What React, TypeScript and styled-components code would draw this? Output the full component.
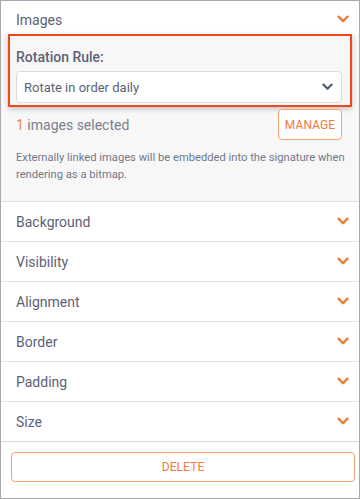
import React from 'react'
import styled, { createGlobalStyle } from 'styled-components'

const GlobalStyle = createGlobalStyle`
  html, body {
    margin: 0;
    padding: 0;
    background: #ffffff;
  }
  body {
    font-family: Roboto, 'Noto Sans', Arial, sans-serif;
    -webkit-font-smoothing: antialiased;
  }
`

const Panel = styled.div`
  box-sizing: border-box;
  width: 360px;
  height: 499px;
  border: 1px solid #a9a9a9;
  background: #ffffff;
  display: flex;
  flex-direction: column;
  overflow: hidden;
`

const SectionHeader = styled.div<{ $open?: boolean }>`
  box-sizing: border-box;
  flex-shrink: 0;
  height: ${({ $open }) => ($open ? '33px' : '40px')};
  padding: ${({ $open }) => ($open ? '4px 10px 0 15px' : '0 10px 0 15px')};
  display: flex;
  align-items: center;
  justify-content: space-between;
  border-bottom: ${({ $open }) => ($open ? 'none' : '1px solid #e4e4e4')};
  font-size: 14px;
  color: #5c6275;
  background: #ffffff;
`

const Expanded = styled.div`
  flex-shrink: 0;
  background: #f7f7f7;
  border-bottom: 1px solid #e4e4e4;
  padding: 0 0 18px;
`

const Highlight = styled.div`
  box-sizing: border-box;
  margin: 0 7px;
  border: 2px solid #ec4a1c;
  padding: 13px 8px 2px 6px;
  box-shadow: 0 2px 5px rgba(0, 0, 0, 0.22);
`

const FieldLabel = styled.div`
  font-size: 14px;
  font-weight: 500;
  line-height: 16px;
  color: #5c6275;
  margin-bottom: 6px;
`

const Select = styled.div`
  box-sizing: border-box;
  height: 32px;
  background: #ffffff;
  border: 1px solid #dcdcdc;
  border-radius: 4px;
  display: flex;
  align-items: center;
  justify-content: space-between;
  padding: 0 8px 0 7px;
  font-size: 13px;
  color: #5c6275;
`

const SelectedRow = styled.div`
  display: flex;
  align-items: center;
  justify-content: space-between;
  padding: 2px 17px 0 15px;
`

const Count = styled.span`
  font-size: 14px;
  color: #7a7f90;
`

const Accent = styled.span`
  color: #f08a4b;
`

const OutlineButton = styled.button<{ $wide?: boolean }>`
  box-sizing: border-box;
  height: ${({ $wide }) => ($wide ? '30px' : '31px')};
  width: ${({ $wide }) => ($wide ? '100%' : '64px')};
  background: #ffffff;
  border: 1px solid #f5a272;
  border-radius: 4px;
  color: #f37a3d;
  font-family: Roboto, Arial, sans-serif;
  font-size: 12px;
  letter-spacing: 0.1px;
  text-transform: uppercase;
  cursor: pointer;
  padding: 0;
`

const Note = styled.p`
  margin: 9px 3px 0 15px;
  font-size: 11.2px;
  line-height: 17px;
  color: #737889;
`

const Footer = styled.div`
  flex: 1;
  padding: 10px 4px 0 10px;
  border-top: 1px solid #d8d8d8;
  margin-top: -1px;
`

const Chevron = ({ color = '#f37a3d', size = 12 }: { color?: string; size?: number }) => (
  <svg width={size} height={size * 0.7} viewBox="0 0 12 8" fill="none">
    <path d="M1.5 1.5 L6 6 L10.5 1.5" stroke={color} strokeWidth={2.4} strokeLinecap="round" strokeLinejoin="round" />
  </svg>
)

const sections = ['Background', 'Visibility', 'Alignment', 'Border', 'Padding', 'Size']

export default function App() {
  return (
    <>
      <GlobalStyle />
      <Panel>
        <SectionHeader $open>
          <span>Images</span>
          <Chevron />
        </SectionHeader>
        <Expanded>
          <Highlight>
            <FieldLabel>Rotation Rule:</FieldLabel>
            <Select>
              <span>Rotate in order daily</span>
              <Chevron color="#4f5a73" size={11} />
            </Select>
          </Highlight>
          <SelectedRow>
            <Count>
              <Accent>1</Accent> images selected
            </Count>
            <OutlineButton>Manage</OutlineButton>
          </SelectedRow>
          <Note>
            Externally linked images will be embedded into the signature when rendering as a bitmap.
          </Note>
        </Expanded>
        {sections.map((name) => (
          <SectionHeader key={name}>
            <span>{name}</span>
            <Chevron />
          </SectionHeader>
        ))}
        <Footer>
          <OutlineButton $wide>Delete</OutlineButton>
        </Footer>
      </Panel>
    </>
  )
}
